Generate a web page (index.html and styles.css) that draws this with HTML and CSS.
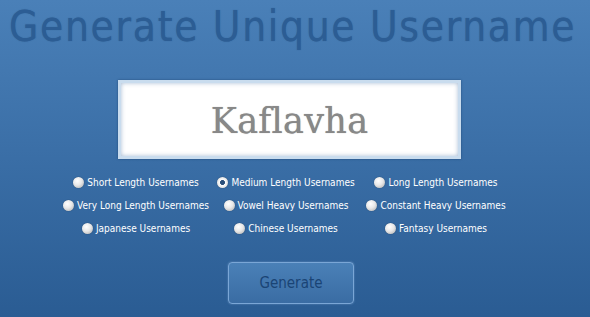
FILE: index.html
```html
<!DOCTYPE html>
<html lang="en">
<head>
    <meta charset="UTF-8">
    <title>Generate Unique Username</title>
    <link rel="stylesheet" href="styles.css">
</head>
<body>
    <h1 class="title">Generate Unique Username</h1>

    <div class="name-box">
        <div class="name-text">Kaflavha</div>
    </div>

    <!-- username types -->
    <div class="options">
        <label class="option"><input type="radio" name="kind"> Short Length Usernames</label>
        <label class="option"><input type="radio" name="kind" checked> Medium Length Usernames</label>
        <label class="option"><input type="radio" name="kind"> Long Length Usernames</label>
        <label class="option"><input type="radio" name="kind"> Very Long Length Usernames</label>
        <label class="option"><input type="radio" name="kind"> Vowel Heavy Usernames</label>
        <label class="option"><input type="radio" name="kind"> Constant Heavy Usernames</label>
        <label class="option"><input type="radio" name="kind"> Japanese Usernames</label>
        <label class="option"><input type="radio" name="kind"> Chinese Usernames</label>
        <label class="option"><input type="radio" name="kind"> Fantasy Usernames</label>
    </div>

    <div class="actions">
        <button class="generate-btn">Generate</button>
    </div>
</body>
</html>
```

FILE: styles.css
```css
html, body {
    height: 100%;
}

body {
    margin: 0;
    padding: 0;
    font-family: "DejaVu Sans Condensed", "DejaVu Sans", sans-serif;
    background: linear-gradient(to bottom, #4a80b8 0%, #3a6ea6 50%, #2a5c93 100%);
    overflow: hidden;
}

.title {
    margin: 0;
    padding: 3px 0 0 9px;
    font-size: 42px;
    font-weight: normal;
    letter-spacing: 1.7px;
    color: #2c5d94;
    line-height: 48px;
    text-shadow: 0 0 1px rgba(40, 85, 135, 0.7);
    white-space: nowrap;
}

.name-box {
    width: 337px;
    height: 73px;
    margin: 29px 0 0 118px;
    background: #fff;
    border: 3px solid #c9dcee;
    box-shadow: inset 0 0 4px rgba(80, 120, 170, 0.5), 0 0 2px rgba(20, 50, 90, 0.6);
    display: flex;
    align-items: center;
    justify-content: center;
}

.name-text {
    font-family: "DejaVu Serif", Georgia, serif;
    font-size: 35px;
    letter-spacing: 0.3px;
    color: #888888;
    padding-top: 2px;
    text-shadow: 0 0 0.8px #888888;
}

.options {
    display: grid;
    grid-template-columns: repeat(3, 150px);
    row-gap: 7px;
    margin: 15px 0 0 61px;
}

.option {
    display: flex;
    align-items: center;
    justify-content: center;
    gap: 3px;
    height: 16px;
    font-size: 10px;
    color: #fff;
    white-space: nowrap;
}

.option input {
    appearance: none;
    -webkit-appearance: none;
    flex-shrink: 0;
    width: 11px;
    height: 11px;
    margin: 0;
    border-radius: 50%;
    background: radial-gradient(circle at 40% 35%, #ffffff 0%, #e8e8e8 45%, #a9a9a9 100%);
    box-shadow: 0 0 1px rgba(0, 0, 0, 0.5);
}

.option input:checked {
    background: radial-gradient(circle, #2a4f7a 0%, #2a4f7a 28%, #ffffff 34%, #e2e2e2 70%, #a0a0a0 100%);
}

.actions {
    margin: 26px 0 0 228px;
}

.generate-btn {
    width: 126px;
    height: 42px;
    font-family: "DejaVu Sans Condensed", "DejaVu Sans", sans-serif;
    font-size: 15px;
    color: #1a4475;
    background: linear-gradient(to bottom, #4a80b7, #3a6ca3);
    border: 1px solid #7aa6d6;
    border-radius: 4px;
    box-shadow: 0 0 2px rgba(140, 180, 225, 0.6);
}
```
